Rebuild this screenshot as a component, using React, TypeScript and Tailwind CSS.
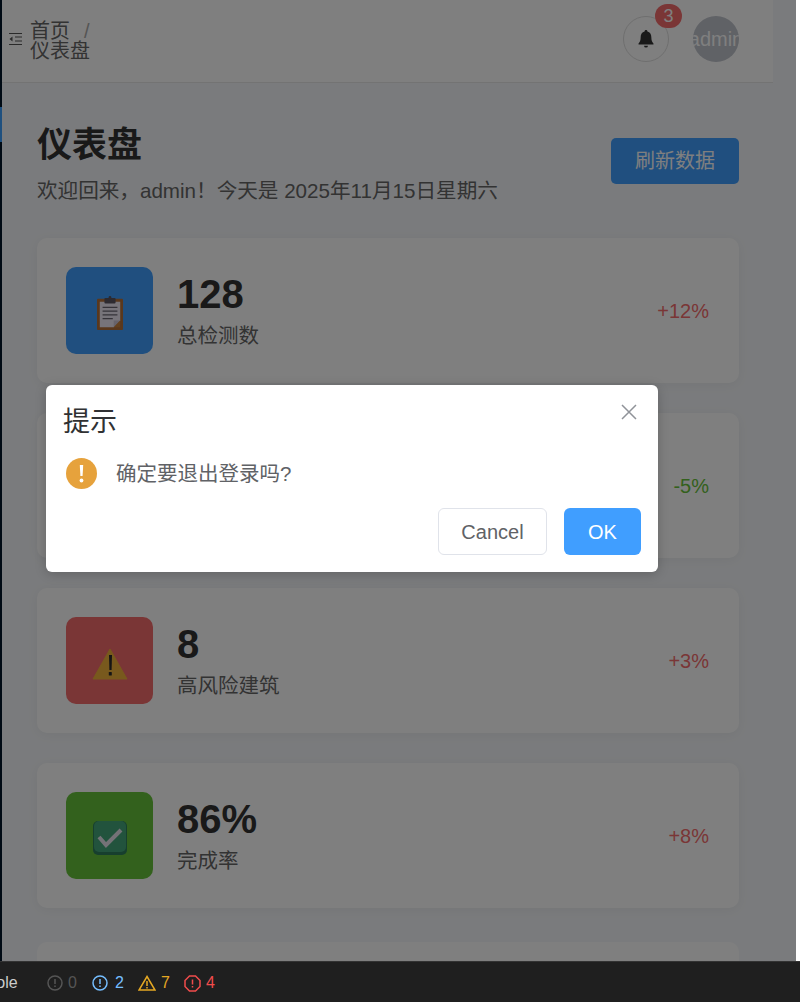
const FONT = "font-['Liberation_Sans','Noto_Sans_CJK_SC',sans-serif]";

const ClipboardIcon = () => (
  <svg width="26" height="34" viewBox="0 0 28 36" preserveAspectRatio="none" className="mt-[5px]">
    <rect x="0" y="3" width="28" height="33" rx="1" fill="#b5713a" />
    <path d="M3 6h22v20l-7 7H3z" fill="#efe9f4" />
    <path d="M18 33l7-7h-7z" fill="#cfc6d6" />
    <path d="M25 26v7h-7z" fill="#c9823f" />
    <rect x="8" y="2" width="12" height="6" rx="1" fill="#5a5560" />
    <rect x="12.5" y="0" width="3" height="3" rx="1.5" fill="#5a5560" />
    <path d="M6 12h16M6 16h16M6 20h16M6 24h11" stroke="#6b6672" strokeWidth="1.2" />
  </svg>
);

const WarningIcon = () => (
  <svg width="36" height="32" viewBox="0 0 36 32" className="mt-[7px]">
    <path d="M18 1L35 31H1z" fill="#f0b23a" stroke="#f0b23a" strokeLinejoin="round" />
    <path d="M17 7h3l-.4 15h-2.200z" fill="#2b2b2b" />
    <rect x="16.800" y="24" width="3" height="3.500" rx=".6" fill="#2b2b2b" />
  </svg>
);

const CheckIcon = () => (
  <svg width="36" height="36" viewBox="0 0 36 36" className="mt-[4px]">
    <rect x="1" y="1" width="34" height="34" rx="5" fill="#2f7f5c" />
    <rect x="2" y="1" width="32" height="31" rx="5" fill="#44a67a" />
    <path d="M7 17l7 8L29 10" fill="none" stroke="#e9e4ee" strokeWidth="4" />
  </svg>
);

const stats = [
  { value: '128', label: '总检测数', trend: '+12%', up: true, color: 'bg-[#409eff]', icon: <ClipboardIcon /> },
  { value: '24', label: '待处理任务', trend: '-5%', up: false, color: 'bg-[#e6a23c]', icon: <ClipboardIcon /> },
  { value: '8', label: '高风险建筑', trend: '+3%', up: true, color: 'bg-[#f56c6c]', icon: <WarningIcon /> },
  { value: '86%', label: '完成率', trend: '+8%', up: true, color: 'bg-[#67c23a]', icon: <CheckIcon /> },
];

const StatCard = ({ stat }: { stat: (typeof stats)[number] }) => (
  <div className="flex h-[145px] shrink-0 items-center rounded-[10px] bg-white pr-[30px] pl-[29px] shadow-[0_2px_12px_rgba(0,0,0,0.05)]">
    <div className={`flex h-[87px] w-[87px] shrink-0 items-center justify-center rounded-[10px] ${stat.color}`}>
      {stat.icon}
    </div>
    <div className="ml-6 flex-1">
      <div className="mt-[-1px] text-[40px] leading-[48px] font-bold text-[#333]">{stat.value}</div>
      <div className="mt-[3px] text-[20.500px] leading-[30px] text-[#666]">{stat.label}</div>
    </div>
    <div className={`text-[20px] ${stat.up ? 'text-[#f56c6c]' : 'text-[#67c23a]'}`}>{stat.trend}</div>
  </div>
);

const Dashboard = () => (
  <div className="flex h-full min-w-0 flex-1 flex-col overflow-hidden bg-[#f5f7fa]">
    <header className="flex h-[83px] w-[771px] shrink-0 items-center border-b border-[#e6e6e6] bg-white pr-[34px] pl-[6px]">
      <svg width="16" height="14" viewBox="0 0 16 14" className="mt-[-4px] shrink-0" fill="none" stroke="#555" strokeWidth="1.2">
        <path d="M1 1.500h13M7 5h7M7 9h7M1 12.500h13" />
        <path d="M4.500 4.500L1.500 7l3 2.500z" fill="#555" stroke="none" />
      </svg>
      <div className="ml-[6px] w-[64px] text-[20px] leading-[20px] text-[#666]">
        <span>首页</span>
        <span className="ml-[14px] text-[#aaa]">/</span>
        <div>仪表盘</div>
      </div>
      <div className="mt-[-4px] ml-auto flex items-center gap-6">
        <div className="relative flex h-[46px] w-[46px] items-center justify-center rounded-full border-[1.500px] border-[#ddd]">
          <svg width="16" height="18" viewBox="0 0 18 20" fill="#333">
            <path d="M9 0c1 0 1.600.7 1.600 1.600 3 .8 4.400 3.300 4.400 6.400 0 3.500.8 5.200 2.400 7v1.300H.6V15c1.600-1.800 2.400-3.500 2.400-7 0-3.100 1.400-5.600 4.400-6.400C7.400.7 8 0 9 0z" />
            <path d="M6.800 17.500h4.400a2.200 2.200 0 0 1-4.400 0z" />
          </svg>
          <span className="absolute top-[-13px] left-[31px] flex h-[24px] w-[27px] items-center justify-center rounded-full bg-[#f56c6c] text-[18px] text-white">
            3
          </span>
        </div>
        <div className="flex h-[46px] w-[46px] items-center justify-center overflow-hidden rounded-full bg-[#c0c4cc] text-[20px] text-white">
          admin
        </div>
      </div>
    </header>
    <main className="flex w-[771px] flex-col overflow-hidden pr-[34px] pl-[35px]">
      <div className="mt-[42px] flex items-start justify-between">
        <div>
          <h1 className="text-[35px] leading-[40px] font-bold text-[#333]">仪表盘</h1>
          <p className="mt-[11px] text-[20.600px] leading-[30px] text-[#666]">欢迎回来，admin！今天是 2025年11月15日星期六</p>
        </div>
        <button className="mt-[13px] h-[46px] w-[128px] rounded-[5px] bg-[#409eff] text-[20px] text-white">刷新数据</button>
      </div>
      <div className="mt-[32px] flex flex-col gap-[30px]">
        {stats.map((stat) => (
          <StatCard key={stat.label} stat={stat} />
        ))}
        <div className="mt-[4px] h-[145px] shrink-0 rounded-[10px] bg-white" />
      </div>
    </main>
  </div>
);

const LogoutDialog = () => (
  <div className="absolute inset-0 bg-black/50">
    <div className="absolute top-[385px] left-[46px] h-[187px] w-[612px] rounded-[6px] bg-white px-[17px] pt-[17px] shadow-[0_2px_12px_rgba(0,0,0,0.2)]">
      <div className="flex items-start justify-between">
        <div className="mt-[2px] text-[27px] leading-[36px] text-[#303133]">提示</div>
        <svg width="16" height="16" viewBox="0 0 16 16" className="mt-[2px] mr-[4px]" stroke="#909399" strokeWidth="1.500">
          <path d="M1 1l14 14M15 1L1 15" />
        </svg>
      </div>
      <div className="mt-[18px] flex items-center px-[3px]">
        <svg width="31" height="31" viewBox="0 0 31 31">
          <circle cx="15.500" cy="15.500" r="15.500" fill="#e6a23c" />
          <path d="M13.800 7h3.400l-.6 11h-2.200z" fill="#fff" />
          <circle cx="15.500" cy="22.500" r="1.900" fill="#fff" />
        </svg>
        <span className="ml-[19px] text-[20.500px] leading-[30px] text-[#606266]">确定要退出登录吗?</span>
      </div>
      <div className="mt-[19px] flex justify-end gap-[17px]">
        <button className="h-[47px] w-[109px] rounded-[6px] border-[1.500px] border-[#e0e3ea] bg-white text-[20px] text-[#606266]">Cancel</button>
        <button className="h-[47px] w-[77px] rounded-[6px] bg-[#409eff] text-[20px] text-white">OK</button>
      </div>
    </div>
  </div>
);

const StatusBar = () => (
  <footer className="flex h-[41px] shrink-0 items-center overflow-hidden border-t border-[#333] bg-[#1f1f1f] pt-[2px] text-[16px]">
    <span className="ml-[-41px] w-[57px] shrink-0 text-[#ccc]">Console</span>
    <svg width="16" height="16" viewBox="0 0 16 16" className="ml-[31px]" fill="none" stroke="#555" strokeWidth="1.500">
      <circle cx="8" cy="8" r="7" />
      <path d="M8 4v5M8 10.500v1.500" />
    </svg>
    <span className="ml-[5px] w-[9px] text-[#555]">0</span>
    <svg width="16" height="16" viewBox="0 0 16 16" className="ml-[15px]" fill="none" stroke="#75beff" strokeWidth="1.500">
      <circle cx="8" cy="8" r="7" />
      <path d="M8 4v5M8 10.500v1.500" />
    </svg>
    <span className="ml-[7px] w-[9px] text-[#75beff]">2</span>
    <svg width="18" height="16" viewBox="0 0 18 16" className="ml-[14px]" fill="none" stroke="#e5a823" strokeWidth="1.500">
      <path d="M9 1.500L17 15H1z" />
      <path d="M9 6v5M9 12v1.500" />
    </svg>
    <span className="ml-[5px] w-[9px] text-[#e5a823]">7</span>
    <svg width="17" height="17" viewBox="0 0 17 17" className="ml-[14px]" fill="none" stroke="#f14c4c" strokeWidth="1.500">
      <path d="M5.500 1h6L16 5.500v6L11.500 16h-6L1 11.500v-6z" />
      <path d="M8.500 4.500v5M8.500 11v1.500" />
    </svg>
    <span className="ml-[5px] text-[#f14c4c]">4</span>
  </footer>
);

export default function App() {
  return (
    <div className={`flex h-[1002px] w-[800px] flex-col overflow-hidden bg-white ${FONT}`}>
      <div className="flex min-h-0 flex-1">
        <div className="relative flex h-full w-[796px] overflow-hidden">
          <aside className="h-full w-[2px] shrink-0 bg-[#001529] pt-[107px]">
            <div className="h-[35px] bg-[#3ea0ff]" />
          </aside>
          <Dashboard />
          <LogoutDialog />
        </div>
      </div>
      <StatusBar />
    </div>
  );
}
